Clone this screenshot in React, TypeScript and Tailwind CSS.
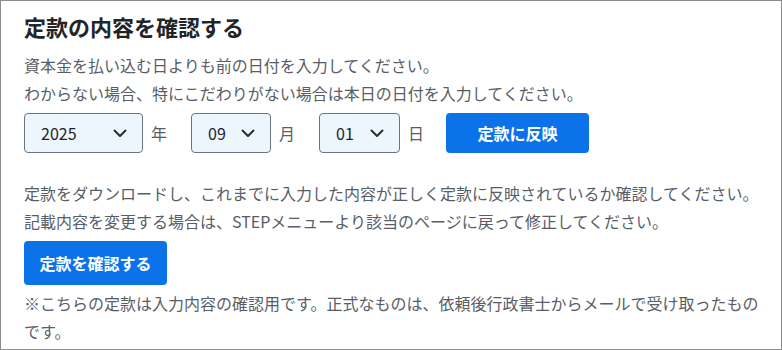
import React from "react";

const font = { fontFamily: '"Noto Sans CJK JP", "Noto Sans", sans-serif' };

function Chevron() {
  return (
    <svg width="14" height="9" viewBox="0 0 14 9" fill="none" className="shrink-0">
      <path d="M1.5 1.5 L7 7 L12.5 1.5" stroke="#2b2f36" strokeWidth="2" strokeLinecap="round" strokeLinejoin="round" />
    </svg>
  );
}

function Select({ value, width }: { value: string; width: string }) {
  return (
    <div
      className={`flex h-10 items-center justify-between rounded-[4px] border border-[#6b7482] bg-[#edf5fd] pl-[16px] pr-[15px] text-[16px] text-[#1f2329] ${width}`}
    >
      <span>{value}</span>
      <Chevron />
    </div>
  );
}

export default function App() {
  return (
    <div
      style={font}
      className="box-border h-[350px] w-[782px] border border-[#8c8c8c] bg-white pl-[23px] pr-[12px] pt-[9px]"
    >
      <h1 className="mb-[8px] text-[22px] font-bold leading-[33px] text-[#222426]">定款の内容を確認する</h1>
      <p className="text-[16px] leading-[28px] text-[#595e66]">
        資本金を払い込む日よりも前の日付を入力してください。
        <br />
        わからない場合、特にこだわりがない場合は本日の日付を入力してください。
      </p>
      <div className="mt-[6px] flex items-center text-[16px]">
        <Select value="2025" width="w-[119px]" />
        <span className="ml-[8px] mr-[24px] text-[#595e66]">年</span>
        <Select value="09" width="w-[80px]" />
        <span className="ml-[8px] mr-[24px] text-[#595e66]">月</span>
        <Select value="01" width="w-[81px]" />
        <span className="ml-[8px] mr-[22px] text-[#595e66]">日</span>
        <button className="flex h-10 w-[143px] items-center justify-center rounded-[4px] bg-[#0b72ea] text-[16px] font-bold text-white">
          定款に反映
        </button>
      </div>
      <p className="mt-[26px] whitespace-nowrap text-[16px] leading-[28px] text-[#595e66]">
        定款をダウンロードし、これまでに入力した内容が正しく定款に反映されているか確認してください。
        <br />
        記載内容を変更する場合は、STEPメニューより該当のページに戻って修正してください。
      </p>
      <button className="mt-[6px] flex h-[44px] w-[143px] items-center justify-center rounded-[4px] bg-[#0b72ea] text-[16px] font-bold text-white">
        定款を確認する
      </button>
      <p className="mt-[4px] whitespace-nowrap text-[16px] leading-[28px] text-[#595e66]">
        ※こちらの定款は入力内容の確認用です。正式なものは、依頼後行政書士からメールで受け取ったもの
        <br />
        です。
      </p>
    </div>
  );
}
